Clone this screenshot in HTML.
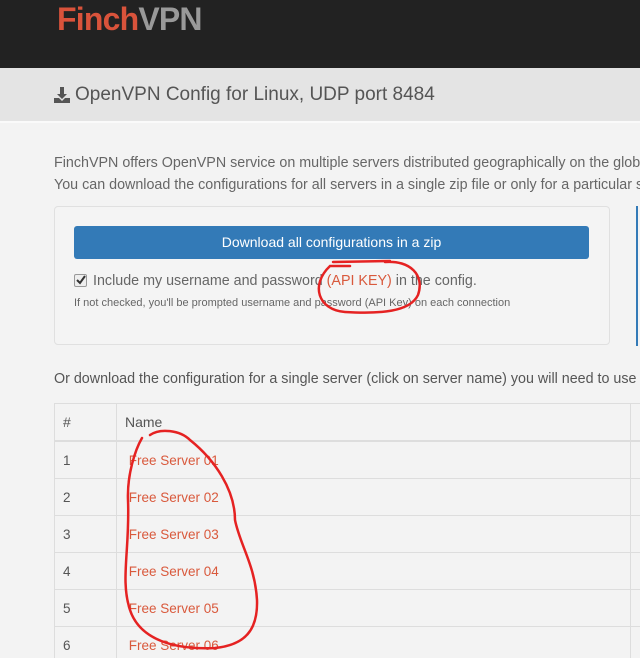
<!DOCTYPE html>
<html><head><style>
body{margin:0;width:640px;height:658px;overflow:hidden;background:#f3f3f3;font-family:"Liberation Sans",sans-serif;color:#555}
#w{position:relative;width:640px;height:658px;overflow:hidden}
.top{position:absolute;left:0;top:0;width:640px;height:68px;background:#222}
.logo{position:absolute;left:57px;top:1px;font-size:32px;font-weight:bold;letter-spacing:-0.8px}
.band{position:absolute;left:0;top:68px;width:640px;height:53px;background:#e4e4e4;border-bottom:2px solid #fafafa}
.band span{position:absolute;left:75px;top:16px;font-size:19px;color:#555}
.p{position:absolute;left:54px;font-size:14.3px;color:#666;white-space:nowrap}
.well{position:absolute;left:54px;top:206px;width:554px;height:137px;border:1px solid #e0e0e0;border-radius:4px;background:#f4f4f4}
.btn{position:absolute;left:74px;top:226px;width:515px;height:33px;background:#337ab7;border-radius:3px;color:#fff;font-size:14px;text-align:center;line-height:33px}
table{position:absolute;left:54px;top:403px;border-collapse:collapse;font-size:13.5px;table-layout:fixed;width:620px}
td{border:1px solid #ddd;height:36px;padding:0 0 0 8px;overflow:hidden}
tr:first-child td{border-bottom:2px solid #ddd;color:#555;font-size:14px}
a{color:#d9593c}
.cb{position:absolute;left:74px;top:274px;width:11px;height:11px;border:1px solid #999;border-radius:2px;background:#eee}
</style></head><body><div id="w">
<div class="top"><div class="logo"><span style="color:#d9533b">Finch</span><span style="color:#999">VPN</span></div></div>
<div class="band"><span>OpenVPN Config for Linux, UDP port 8484</span></div>
<svg style="position:absolute;left:53px;top:86px" width="18" height="18" viewBox="0 0 18 18"><path d="M7 1h4v7h3l-5 5-5-5h3z" fill="#555"/><path d="M1 12h5l3 3 3-3h5v5H1z" fill="#555"/></svg>
<div class="p" style="top:155px">FinchVPN offers OpenVPN service on multiple servers distributed geographically on the globe.</div>
<div class="p" style="top:177px">You can download the configurations for all servers in a single zip file or only for a particular server.</div>
<div class="well"></div>
<div style="position:absolute;left:636px;top:206px;width:2px;height:140px;background:#337ab7"></div>
<div class="btn">Download all configurations in a zip</div>
<div class="cb"></div>
<svg style="position:absolute;left:75px;top:274px" width="12" height="12"><path d="M2 6l3 3 5-7" stroke="#333" stroke-width="2" fill="none"/></svg>
<div class="p" style="top:273px;left:93px;color:#666">Include my username and password <span style="color:#d9593c">(API KEY)</span> in the config.</div>
<div class="p" style="top:297px;left:74px;font-size:11px;color:#666">If not checked, you'll be prompted username and password (API Key) on each connection</div>
<div class="p" style="top:371px;color:#555">Or download the configuration for a single server (click on server name) you will need to use</div>
<table>
<colgroup><col style="width:62px"><col style="width:514px"><col style="width:44px"></colgroup>
<tr><td>#</td><td>Name</td><td></td></tr>
<tr><td>1</td><td><a>&nbsp;Free Server 01</a></td><td></td></tr>
<tr><td>2</td><td><a>&nbsp;Free Server 02</a></td><td></td></tr>
<tr><td>3</td><td><a>&nbsp;Free Server 03</a></td><td></td></tr>
<tr><td>4</td><td><a>&nbsp;Free Server 04</a></td><td></td></tr>
<tr><td>5</td><td><a>&nbsp;Free Server 05</a></td><td></td></tr>
<tr><td>6</td><td><a>&nbsp;Free Server 06</a></td><td></td></tr>
</table>
<svg style="position:absolute;left:0;top:0" width="640" height="658" fill="none" stroke="#e52222" stroke-width="2.5" stroke-linecap="round">
<path d="M333 262 L390 261 M350 266 L330 266 C310 285 318 310 345 312 C380 314 410 312 418 295 C425 275 410 260 385 262"/>
<path d="M150 435 C160 428 180 430 190 440 C215 460 235 490 235 520 C240 545 255 565 257 600 C258 630 245 645 215 648 C175 650 140 640 130 610 C120 580 130 550 128 500 C127 475 135 450 142 438"/>
</svg>
</div></body></html>
